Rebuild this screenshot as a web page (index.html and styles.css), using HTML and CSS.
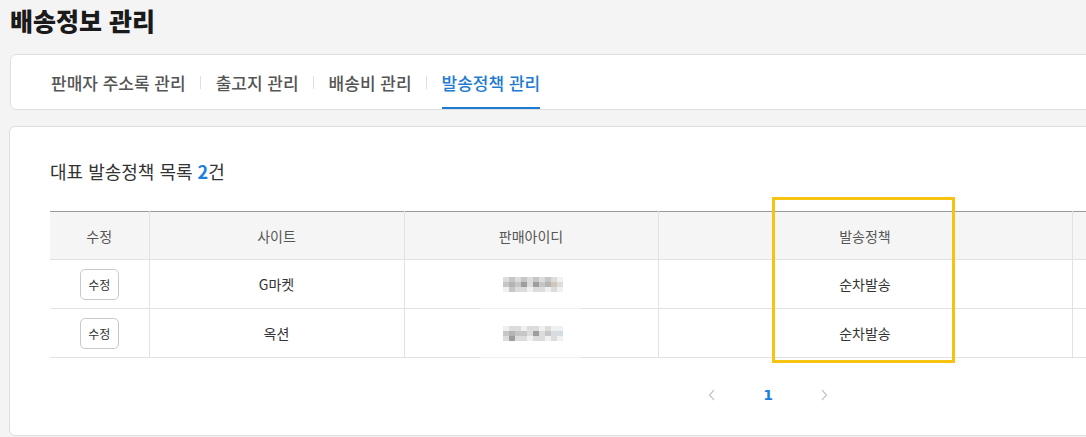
FILE: index.html
```html
<!DOCTYPE html>
<html lang="ko">
<head>
<meta charset="utf-8">
<title>배송정보 관리</title>
<link rel="stylesheet" href="styles.css">
</head>
<body>
<div class="page">
  <h1 class="title">배송정보 관리</h1>

  <nav class="tabs-card">
    <a class="tab">판매자 주소록 관리</a>
    <span class="sep"></span>
    <a class="tab">출고지 관리</a>
    <span class="sep"></span>
    <a class="tab">배송비 관리</a>
    <span class="sep"></span>
    <a class="tab active">발송정책 관리</a>
  </nav>

  <section class="main-card">
    <h2 class="list-title">대표 발송정책 목록 <b class="count">2</b>건</h2>

    <table class="grid">
      <colgroup>
        <col class="c1"><col class="c2"><col class="c3"><col class="c4"><col class="c5">
      </colgroup>
      <thead>
        <tr><th>수정</th><th>사이트</th><th>판매아이디</th><th>발송정책</th><th></th></tr>
      </thead>
      <tbody>
        <tr>
          <td><button class="edit-btn">수정</button></td>
          <td>G마켓</td>
          <td class="id-cell">
            <div class="blur">
              <i class="p1"></i><i class="p2"></i><i class="p1"></i><i class="p2"></i><i class="p1"></i><i class="p2"></i><i class="p1"></i><i class="p2"></i><i class="p1"></i><i class="p0"></i>
              <i class="p2"></i><i class="p3"></i><i class="p2"></i><i class="p4"></i><i class="p1"></i><i class="p4"></i><i class="p2"></i><i class="p3"></i><i class="p5"></i><i class="p1"></i>
              <i class="p0"></i><i class="p2"></i><i class="p1"></i><i class="p1"></i><i class="p0"></i><i class="p1"></i><i class="p1"></i><i class="p0"></i><i class="p1"></i><i class="p0"></i>
            </div>
            <span class="mask"></span>
          </td>
          <td>순차발송</td>
          <td></td>
        </tr>
        <tr>
          <td><button class="edit-btn">수정</button></td>
          <td>옥션</td>
          <td class="id-cell">
            <div class="blur">
              <i class="p0"></i><i class="p1"></i><i class="p1"></i><i class="p0"></i><i class="p1"></i><i class="p1"></i><i class="p0"></i><i class="p1"></i><i class="p0"></i><i class="p0"></i>
              <i class="p2"></i><i class="p3"></i><i class="p2"></i><i class="p2"></i><i class="p1"></i><i class="p4"></i><i class="p1"></i><i class="p2"></i><i class="p1"></i><i class="p6"></i>
              <i class="p1"></i><i class="p4"></i><i class="p1"></i><i class="p1"></i><i class="p0"></i><i class="p1"></i><i class="p1"></i><i class="p0"></i><i class="p1"></i><i class="p0"></i>
            </div>
            <span class="mask"></span>
          </td>
          <td>순차발송</td>
          <td></td>
        </tr>
      </tbody>
    </table>

    <div class="pager">
      <span class="arrow"><svg width="8" height="12" viewBox="0 0 8 12"><path d="M6 1 L1.5 6 L6 11" fill="none" stroke="#c4c4c4" stroke-width="1.2"/></svg></span>
      <span class="page-num">1</span>
      <span class="arrow"><svg width="8" height="12" viewBox="0 0 8 12"><path d="M2 1 L6.5 6 L2 11" fill="none" stroke="#c4c4c4" stroke-width="1.2"/></svg></span>
    </div>

    <div class="highlight"></div>
  </section>
</div>
</body>
</html>
```

FILE: styles.css
```css
html, body {
  margin: 0;
  padding: 0;
  background: #f4f4f4;
  overflow: hidden;
}
body {
  font-family: "Noto Sans CJK KR", "Noto Sans", sans-serif;
  color: #333;
}
.page {
  padding: 4px 0 0 9px;
  width: 1600px;
}
.title {
  margin: 0 0 17px 1px;
  font-size: 25px;
  line-height: 33px;
  font-weight: 900;
  color: #1a1a1a;
  letter-spacing: 0;
}
.tabs-card {
  display: flex;
  align-items: center;
  margin-left: 1px;
  width: 1500px;
  box-sizing: border-box;
  height: 56px;
  background: #fff;
  border: 1px solid #dedede;
  border-radius: 6px;
  padding-left: 40px;
}
.tab {
  height: 100%;
  display: flex;
  align-items: center;
  box-sizing: border-box;
  font-size: 17px;
  color: #555;
  font-weight: 500;
  border-bottom: 2px solid transparent;
  padding-top: 2px;
}
.tab.active {
  color: #1e7bd2;
  border-bottom-color: #1e7bd2;
}
.sep {
  width: 1px;
  height: 13px;
  background: #e0e0e0;
  margin: 0 15px 0 14px;
}
.main-card {
  position: relative;
  margin-top: 16px;
  width: 1518px;
  height: 310px;
  box-sizing: border-box;
  background: #fff;
  border: 1px solid #dedede;
  border-radius: 6px;
  padding: 31px 40px 0 40px;
}
.list-title {
  margin: 0;
  font-size: 18px;
  line-height: 27px;
  font-weight: 400;
  color: #333;
}
.count {
  color: #1a7fdf;
  font-weight: 700;
}
.grid {
  margin-top: 26px;
  width: 100%;
  border-collapse: collapse;
  table-layout: fixed;
  font-size: 14px;
}
.c1 { width: 99px; }
.c2 { width: 255px; }
.c3 { width: 254px; }
.c4 { width: 414px; }
.grid thead tr {
  border-top: 1px solid #9a9a9a;
}
.grid th {
  height: 47px;
  padding: 0;
  background: #f5f5f5;
  color: #555;
  font-weight: 400;
  border-left: 1px solid #e2e2e2;
  border-bottom: 1px solid #e2e2e2;
}
.grid td {
  height: 48px;
  padding: 0;
  text-align: center;
  color: #333;
  border-left: 1px solid #e2e2e2;
  border-bottom: 1px solid #e2e2e2;
}
.grid th:first-child, .grid td:first-child {
  border-left: none;
}
.edit-btn {
  width: 39px;
  height: 31px;
  padding: 0;
  background: #fff;
  border: 1px solid #c9c9c9;
  border-radius: 5px;
  font-family: inherit;
  font-size: 12px;
  color: #333;
  cursor: pointer;
}
.id-cell {
  position: relative;
}
.blur {
  display: grid;
  grid-template-columns: repeat(10, 6px);
  grid-auto-rows: 5px;
  width: 60px;
  margin: 0 auto;
  position: relative;
  left: 2px;
}
.blur i { display: block; }
.p0 { background: #f0f0f0; }
.p1 { background: #dcdcdc; }
.p2 { background: #c6c6c6; }
.p3 { background: #b4b4b4; }
.p4 { background: #9e9e9e; }
.p5 { background: #d2c6ba; }
.p6 { background: #d2dde6; }
.mask {
  position: absolute;
  left: 75px;
  width: 100px;
  bottom: -1px;
  height: 1px;
  background: #f1f1f1;
}
.pager {
  display: flex;
  justify-content: center;
  align-items: center;
  margin-top: 29px;
}
.arrow, .page-num {
  width: 56px;
  display: flex;
  justify-content: center;
}
.page-num {
  font-family: "DejaVu Sans", sans-serif;
  font-weight: 700;
  font-size: 14px;
  color: #1a7fdf;
}
.highlight {
  position: absolute;
  left: 762px;
  top: 70px;
  width: 183px;
  height: 166px;
  border: 3px solid #f6c310;
  box-sizing: border-box;
  pointer-events: none;
}
```
